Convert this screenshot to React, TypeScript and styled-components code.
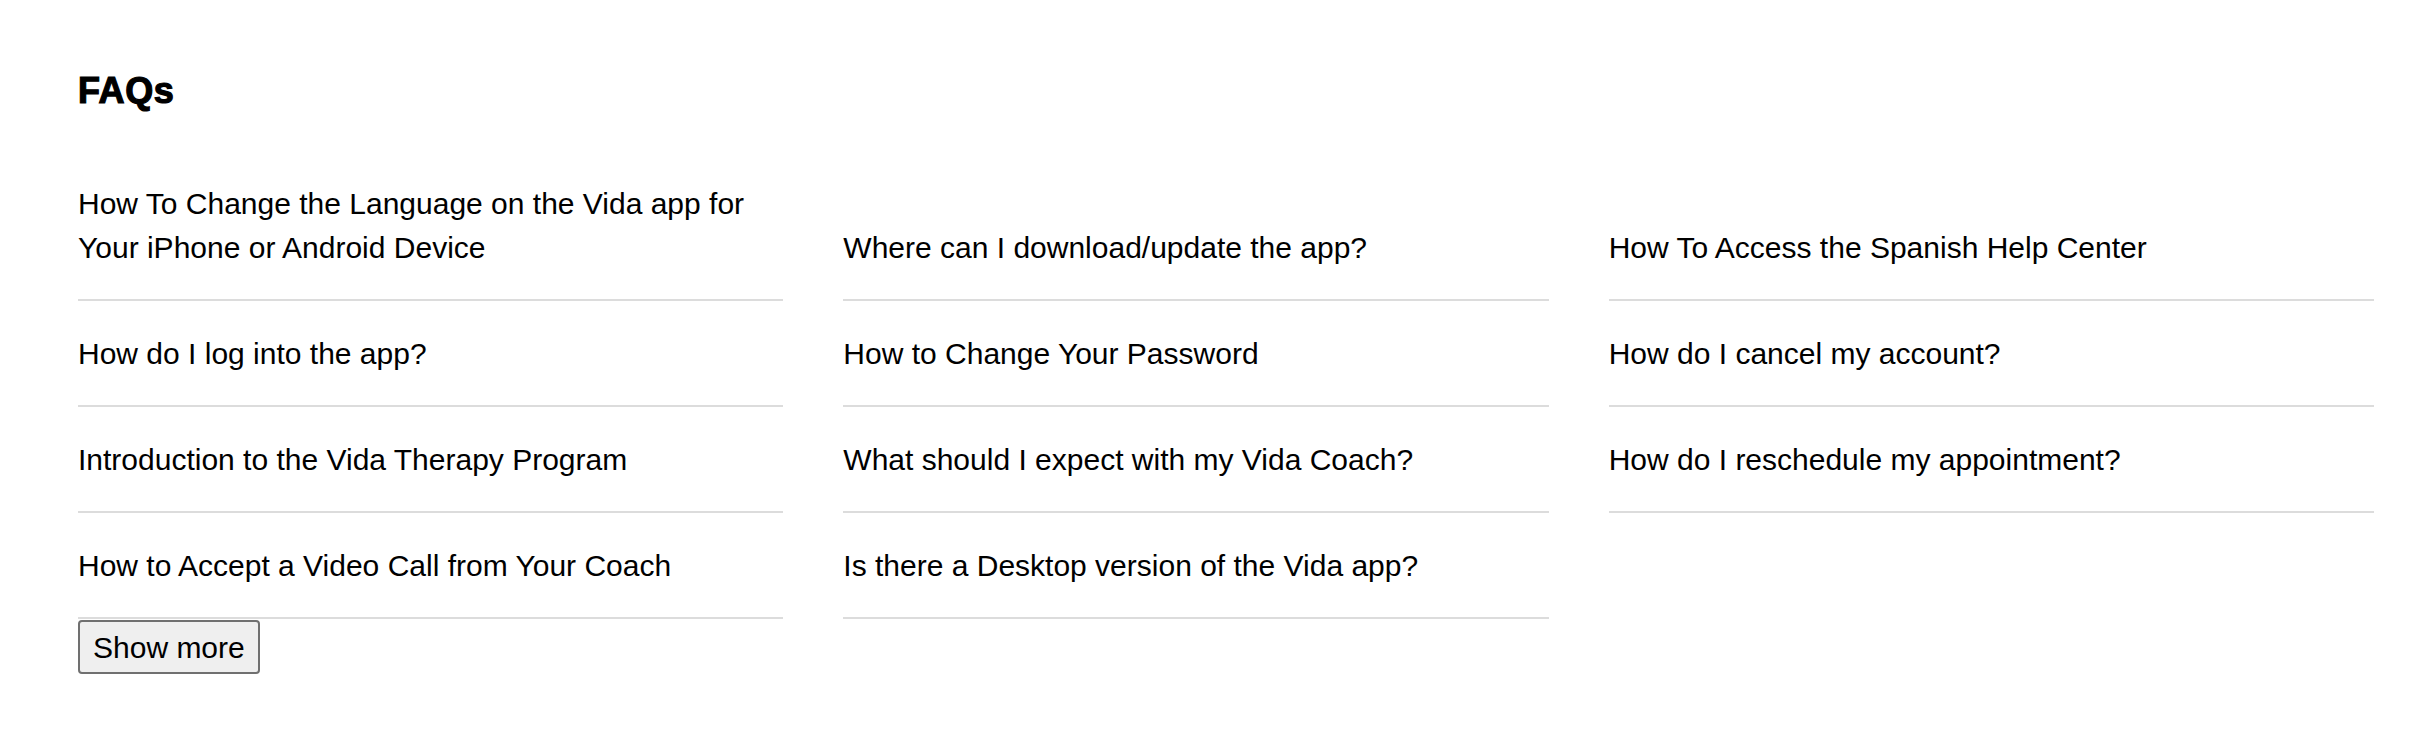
import React from 'react'
import styled, { createGlobalStyle } from 'styled-components'

const GlobalStyle = createGlobalStyle`
  html, body {
    margin: 0;
    padding: 0;
    background: #fff;
  }

  body {
    font-family: 'Liberation Sans', Arial, Helvetica, sans-serif;
    color: #000;
  }
`

const Page = styled.section`
  padding: 70px 60px 40px 78px;
`

const Title = styled.h2`
  margin: 0 0 39px 0;
  font-size: 36px;
  line-height: 42px;
  font-weight: 700;
  letter-spacing: 0.6px;
  -webkit-text-stroke: 1.2px #000;
`

const FaqGrid = styled.ul`
  list-style: none;
  margin: 0;
  padding: 0;
  display: grid;
  grid-template-columns: repeat(3, 1fr);
`

const FaqItem = styled.li<{ $last: boolean }>`
  display: flex;
  align-items: flex-end;
  margin-right: ${(p) => (p.$last ? 0 : 60)}px;
  padding: 31px 0 29px;
  border-bottom: 2px solid #dcdcdc;
  font-size: 30px;
  line-height: 44px;
`

const FaqLink = styled.a`
  color: #000;
  text-decoration: none;
`

const ShowMore = styled.button`
  display: block;
  margin: 1px 0 0 0;
  padding: 9px 13px 8px;
  font-family: 'Liberation Sans', Arial, sans-serif;
  font-size: 30px;
  line-height: 33px;
  color: #000;
  background: #efefef;
  border: 2px solid #707070;
  border-radius: 4px;
`

const faqs = [
  'How To Change the Language on the Vida app for Your iPhone or Android Device',
  'Where can I download/update the app?',
  'How To Access the Spanish Help Center',
  'How do I log into the app?',
  'How to Change Your Password',
  'How do I cancel my account?',
  'Introduction to the Vida Therapy Program',
  'What should I expect with my Vida Coach?',
  'How do I reschedule my appointment?',
  'How to Accept a Video Call from Your Coach',
  'Is there a Desktop version of the Vida app?',
]

export default function App() {
  return (
    <>
      <GlobalStyle />
      <Page>
        <Title>FAQs</Title>
        <FaqGrid>
          {faqs.map((q, i) => (
            <FaqItem key={q} $last={i % 3 === 2}>
              <FaqLink href="#">{q}</FaqLink>
            </FaqItem>
          ))}
        </FaqGrid>
        <ShowMore type="button">Show more</ShowMore>
      </Page>
    </>
  )
}
